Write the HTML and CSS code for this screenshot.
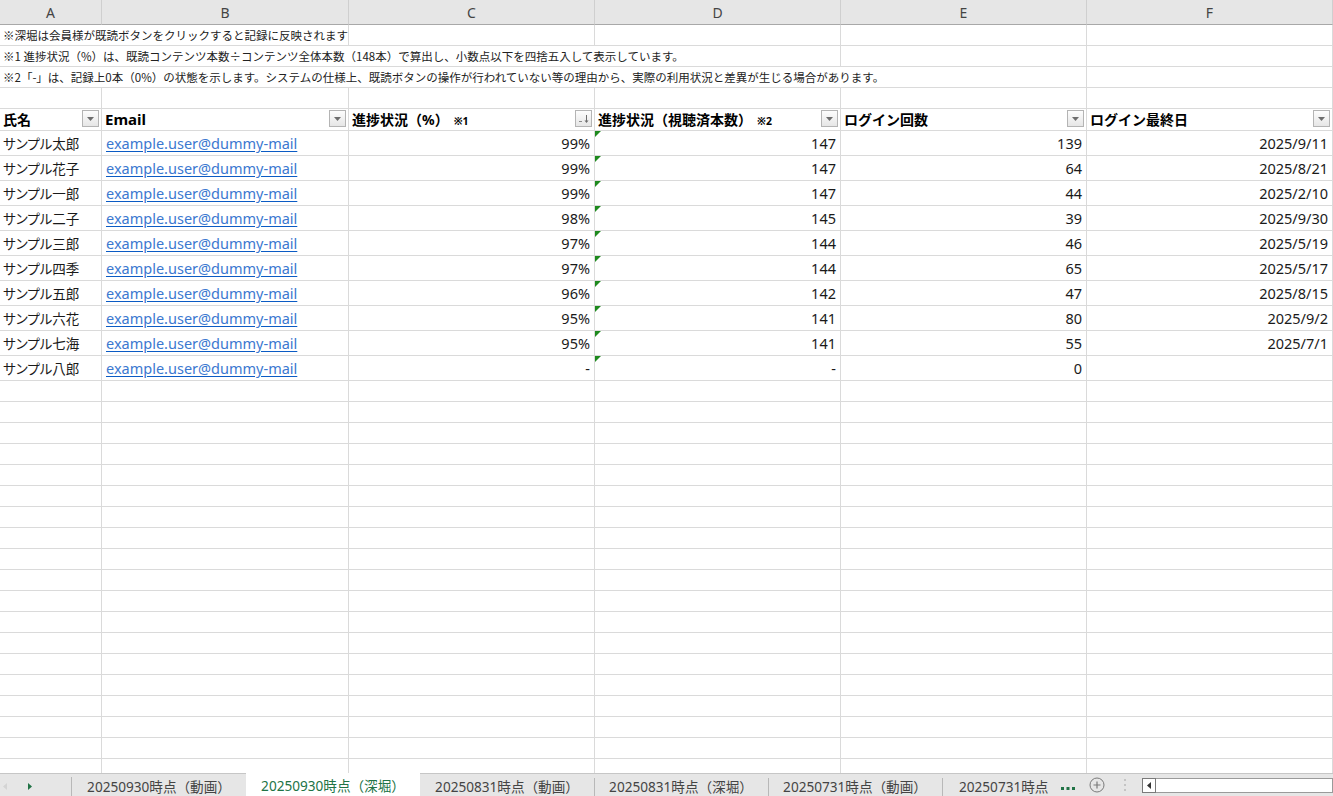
FILE: index.html
```html
<!DOCTYPE html>
<html lang="ja">
<head>
<meta charset="utf-8">
<title>Sheet</title>
<link rel="stylesheet" href="styles.css">
</head>
<body>
<div class="app">
  <div class="sheet">
    <div class="row colhdr">
      <div class="c">A</div><div class="c">B</div><div class="c">C</div><div class="c">D</div><div class="c">E</div><div class="c">F</div>
    </div>
    <div class="row note">
      <div class="c span2">※深堀は会員様が既読ボタンをクリックすると記録に反映されます</div>
      <div class="c"></div><div class="c"></div><div class="c"></div><div class="c"></div>
    </div>
    <div class="row note">
      <div class="c span4">※1 進捗状況（%）は、既読コンテンツ本数÷コンテンツ全体本数（148本）で算出し、小数点以下を四捨五入して表示しています。</div>
      <div class="c"></div><div class="c"></div>
    </div>
    <div class="row note">
      <div class="c span5">※2「-」は、記録上0本（0%）の状態を示します。システムの仕様上、既読ボタンの操作が行われていない等の理由から、実際の利用状況と差異が生じる場合があります。</div>
      <div class="c"></div>
    </div>
    <div class="row note">
      <div class="c"></div><div class="c"></div><div class="c"></div><div class="c"></div><div class="c"></div><div class="c"></div>
    </div>
    <div class="row head">
      <div class="c"><span>氏名</span><i class="flt"><svg viewBox="0 0 7 4" width="7" height="4"><path d="M0 0h7L3.5 4z" fill="#6d6d6d"/></svg></i></div>
      <div class="c"><span class="lat">Email</span><i class="flt"><svg viewBox="0 0 7 4" width="7" height="4"><path d="M0 0h7L3.5 4z" fill="#6d6d6d"/></svg></i></div>
      <div class="c"><span>進捗状況（%）<small>※1</small></span><i class="flt"><svg viewBox="0 0 12 10" width="12" height="10"><path d="M1 7.5h3" stroke="#8a8a8a" stroke-width="1"/><path d="M8.5 1v7" stroke="#6d6d6d" stroke-width="1"/><path d="M6.5 6.5l2 2.5 2-2.5z" fill="#6d6d6d"/></svg></i></div>
      <div class="c"><span>進捗状況（視聴済本数）<small>※2</small></span><i class="flt"><svg viewBox="0 0 7 4" width="7" height="4"><path d="M0 0h7L3.5 4z" fill="#6d6d6d"/></svg></i></div>
      <div class="c"><span>ログイン回数</span><i class="flt"><svg viewBox="0 0 7 4" width="7" height="4"><path d="M0 0h7L3.5 4z" fill="#6d6d6d"/></svg></i></div>
      <div class="c"><span>ログイン最終日</span><i class="flt"><svg viewBox="0 0 7 4" width="7" height="4"><path d="M0 0h7L3.5 4z" fill="#6d6d6d"/></svg></i></div>
    </div>

    <div class="row data"><div class="c nm">サンプル太郎</div><div class="c mail"><a>example.user@dummy-mail</a></div><div class="c num">99%</div><div class="c num tri">147</div><div class="c num">139</div><div class="c num">2025/9/11</div></div>
    <div class="row data"><div class="c nm">サンプル花子</div><div class="c mail"><a>example.user@dummy-mail</a></div><div class="c num">99%</div><div class="c num tri">147</div><div class="c num">64</div><div class="c num">2025/8/21</div></div>
    <div class="row data"><div class="c nm">サンプル一郎</div><div class="c mail"><a>example.user@dummy-mail</a></div><div class="c num">99%</div><div class="c num tri">147</div><div class="c num">44</div><div class="c num">2025/2/10</div></div>
    <div class="row data"><div class="c nm">サンプル二子</div><div class="c mail"><a>example.user@dummy-mail</a></div><div class="c num">98%</div><div class="c num tri">145</div><div class="c num">39</div><div class="c num">2025/9/30</div></div>
    <div class="row data"><div class="c nm">サンプル三郎</div><div class="c mail"><a>example.user@dummy-mail</a></div><div class="c num">97%</div><div class="c num tri">144</div><div class="c num">46</div><div class="c num">2025/5/19</div></div>
    <div class="row data"><div class="c nm">サンプル四季</div><div class="c mail"><a>example.user@dummy-mail</a></div><div class="c num">97%</div><div class="c num tri">144</div><div class="c num">65</div><div class="c num">2025/5/17</div></div>
    <div class="row data"><div class="c nm">サンプル五郎</div><div class="c mail"><a>example.user@dummy-mail</a></div><div class="c num">96%</div><div class="c num tri">142</div><div class="c num">47</div><div class="c num">2025/8/15</div></div>
    <div class="row data"><div class="c nm">サンプル六花</div><div class="c mail"><a>example.user@dummy-mail</a></div><div class="c num">95%</div><div class="c num tri">141</div><div class="c num">80</div><div class="c num">2025/9/2</div></div>
    <div class="row data"><div class="c nm">サンプル七海</div><div class="c mail"><a>example.user@dummy-mail</a></div><div class="c num">95%</div><div class="c num tri">141</div><div class="c num">55</div><div class="c num">2025/7/1</div></div>
    <div class="row data"><div class="c nm">サンプル八郎</div><div class="c mail"><a>example.user@dummy-mail</a></div><div class="c num">-</div><div class="c num tri">-</div><div class="c num">0</div><div class="c num"></div></div>

    <div class="row empty"><div class="c"></div><div class="c"></div><div class="c"></div><div class="c"></div><div class="c"></div><div class="c"></div></div>
    <div class="row empty"><div class="c"></div><div class="c"></div><div class="c"></div><div class="c"></div><div class="c"></div><div class="c"></div></div>
    <div class="row empty"><div class="c"></div><div class="c"></div><div class="c"></div><div class="c"></div><div class="c"></div><div class="c"></div></div>
    <div class="row empty"><div class="c"></div><div class="c"></div><div class="c"></div><div class="c"></div><div class="c"></div><div class="c"></div></div>
    <div class="row empty"><div class="c"></div><div class="c"></div><div class="c"></div><div class="c"></div><div class="c"></div><div class="c"></div></div>
    <div class="row empty"><div class="c"></div><div class="c"></div><div class="c"></div><div class="c"></div><div class="c"></div><div class="c"></div></div>
    <div class="row empty"><div class="c"></div><div class="c"></div><div class="c"></div><div class="c"></div><div class="c"></div><div class="c"></div></div>
    <div class="row empty"><div class="c"></div><div class="c"></div><div class="c"></div><div class="c"></div><div class="c"></div><div class="c"></div></div>
    <div class="row empty"><div class="c"></div><div class="c"></div><div class="c"></div><div class="c"></div><div class="c"></div><div class="c"></div></div>
    <div class="row empty"><div class="c"></div><div class="c"></div><div class="c"></div><div class="c"></div><div class="c"></div><div class="c"></div></div>
    <div class="row empty"><div class="c"></div><div class="c"></div><div class="c"></div><div class="c"></div><div class="c"></div><div class="c"></div></div>
    <div class="row empty"><div class="c"></div><div class="c"></div><div class="c"></div><div class="c"></div><div class="c"></div><div class="c"></div></div>
    <div class="row empty"><div class="c"></div><div class="c"></div><div class="c"></div><div class="c"></div><div class="c"></div><div class="c"></div></div>
    <div class="row empty"><div class="c"></div><div class="c"></div><div class="c"></div><div class="c"></div><div class="c"></div><div class="c"></div></div>
    <div class="row empty"><div class="c"></div><div class="c"></div><div class="c"></div><div class="c"></div><div class="c"></div><div class="c"></div></div>
    <div class="row empty"><div class="c"></div><div class="c"></div><div class="c"></div><div class="c"></div><div class="c"></div><div class="c"></div></div>
    <div class="row empty"><div class="c"></div><div class="c"></div><div class="c"></div><div class="c"></div><div class="c"></div><div class="c"></div></div>
    <div class="row empty"><div class="c"></div><div class="c"></div><div class="c"></div><div class="c"></div><div class="c"></div><div class="c"></div></div>
    <div class="row empty"><div class="c"></div><div class="c"></div><div class="c"></div><div class="c"></div><div class="c"></div><div class="c"></div></div>
  </div>

  <div class="tabbar">
    <div class="nav">
      <svg class="navl" viewBox="0 0 4 7" width="4" height="7"><path d="M4 0v7L0 3.5z" fill="#d4d4d4"/></svg>
      <svg class="navr" viewBox="0 0 4 7" width="4" height="7"><path d="M0 0v7l4-3.5z" fill="#217346"/></svg>
    </div>
    <div class="tab">20250930時点（動画）</div>
    <div class="tab active">20250930時点（深堀）</div>
    <div class="tab">20250831時点（動画）</div>
    <div class="tab">20250831時点（深堀）</div>
    <div class="tab">20250731時点（動画）</div>
    <div class="tab last">20250731時点</div>
    <div class="more"><svg viewBox="0 0 14 3" width="14" height="3"><rect x="0" y="0" width="3" height="3" fill="#217346"/><rect x="5.5" y="0" width="3" height="3" fill="#217346"/><rect x="11" y="0" width="3" height="3" fill="#217346"/></svg></div>
    <div class="add"><svg viewBox="0 0 16 16" width="16" height="16"><circle cx="8" cy="8" r="7" fill="none" stroke="#7a7a7a" stroke-width="1"/><path d="M8 4.5v7M4.5 8h7" stroke="#7a7a7a" stroke-width="1.2"/></svg></div>
    <div class="vdots"><svg viewBox="0 0 2 12" width="2" height="12"><rect y="0" width="2" height="2" fill="#c4c4c4"/><rect y="5" width="2" height="2" fill="#c4c4c4"/><rect y="10" width="2" height="2" fill="#c4c4c4"/></svg></div>
    <div class="hscroll">
      <div class="sbtn"><svg viewBox="0 0 4 7" width="4" height="7"><path d="M4 0v7L0 3.5z" fill="#333"/></svg></div>
      <div class="strack"></div>
    </div>
  </div>
</div>
</body>
</html>
```

FILE: styles.css
```css
* { box-sizing: border-box; }
html, body { margin: 0; padding: 0; background: #fff; }
body {
  font-family: "Noto Sans", "Noto Sans CJK JP", sans-serif;
  color: #111;
  width: 1333px;
  height: 796px;
  overflow: hidden;
}
.app {
  display: flex;
  flex-direction: column;
  width: 1333px;
  height: 796px;
}
.sheet {
  flex: 1;
  overflow: hidden;
  display: flex;
  flex-direction: column;
}
.row {
  display: grid;
  grid-template-columns: 102px 247px 246px 246px 246px 246px;
  flex: none;
}
.c {
  border-right: 1px solid #dadada;
  border-bottom: 1px solid #dadada;
  min-width: 0;
  white-space: nowrap;
  overflow: hidden;
}

/* column header */
.colhdr { height: 25px; background: #e6e6e6; }
.colhdr .c {
  display: flex;
  align-items: center;
  justify-content: center;
  font-family: "Noto Sans", sans-serif;
  font-size: 14px;
  color: #444;
  border-right: 1px solid #cfcfcf;
  border-bottom: 1px solid #a8a8a8;
  padding-top: 1px;
}

/* notes */
.note { height: 21px; }
.note .c {
  font-family: "Noto Sans CJK JP", sans-serif;
  font-size: 11.5px;
  color: #222;
  display: flex;
  align-items: center;
  padding-left: 3px;
  overflow: visible;
}
.span2 { grid-column: span 2; }
.span4 { grid-column: span 4; }
.span5 { grid-column: span 5; }

/* header row */
.head { height: 22px; }
.head .c {
  display: flex;
  align-items: center;
  justify-content: space-between;
  padding: 0 2px 2px 3px;
  font-family: "Noto Sans", "Noto Sans CJK JP", sans-serif;
  font-weight: 700;
  font-size: 14px;
  color: #000;
}
.head .lat { font-size: 15px; }
.head small { font-size: 10.5px; margin-left: 5px; }
.flt {
  width: 17px;
  height: 17px;
  border: 1px solid #b4b4b4;
  background: linear-gradient(#fdfdfd, #e6e6e6);
  display: flex;
  align-items: center;
  justify-content: center;
  flex: none;
}

/* data rows */
.data { height: 25px; }
.data .c {
  display: flex;
  align-items: center;
  padding: 0 4px 1px 3px;
  font-size: 14.5px;
  color: #1a1a1a;
}
.data .nm { font-family: "Noto Sans CJK JP", sans-serif; font-size: 13.5px; font-feature-settings: "palt" 1; }
.data .mail a {
  color: #3b78d0;
  text-decoration: underline;
  text-decoration-color: #0b5bc4;
  text-underline-offset: 2px;
  margin-left: 1px;
}
.data .num { justify-content: flex-end; }
.tri { position: relative; }
.tri::before {
  content: "";
  position: absolute;
  left: 0;
  top: 0;
  border-top: 6px solid #1e8a1e;
  border-right: 6px solid transparent;
}

.empty { height: 21px; }

/* tab bar */
.tabbar {
  flex: none;
  height: 23px;
  background: #e6e6e6;
  border-top: 1px solid #c6c6c6;
  display: flex;
  align-items: stretch;
  font-family: "Noto Sans", "Noto Sans CJK JP", sans-serif;
  font-size: 13.6px;
  color: #444;
  white-space: nowrap;
}
.nav {
  width: 72px;
  flex: none;
  display: flex;
  align-items: center;
  padding-left: 3px;
  gap: 21px;
  border-right: 1px solid #b8b8b8;
  margin: 3px 0 0;
}
.tab {
  width: 174px;
  flex: none;
  display: flex;
  align-items: center;
  justify-content: center;
  position: relative;
  padding-top: 1px;
}
.tab + .tab:not(.active)::before {
  content: "";
  position: absolute;
  left: 0;
  top: 4px;
  bottom: 0;
  border-left: 1px solid #b8b8b8;
}
.tab.active {
  background: #fff;
  color: #217346;
  margin-top: -1px;
}
.tab.active + .tab::before { display: none; }
.tab.last { width: 112px; justify-content: flex-start; padding-left: 17px; overflow: hidden; }
.more {
  width: 27px;
  flex: none;
  display: flex;
  align-items: center;
  padding-left: 7px;
  padding-top: 6px;
}
.add { width: 32px; flex: none; display: flex; align-items: center; justify-content: center; }
.vdots { width: 24px; flex: none; display: flex; align-items: center; justify-content: center; }
.hscroll {
  flex: 1;
  display: flex;
  align-items: center;
  padding-left: 5px;
}
.sbtn {
  width: 14px;
  height: 15px;
  background: #fff;
  border: 1px solid #7a7a7a;
  display: flex;
  align-items: center;
  justify-content: center;
}
.strack {
  flex: 1;
  height: 15px;
  background: #fff;
  border: 1px solid #9a9a9a;
  border-left: none;
}
```
